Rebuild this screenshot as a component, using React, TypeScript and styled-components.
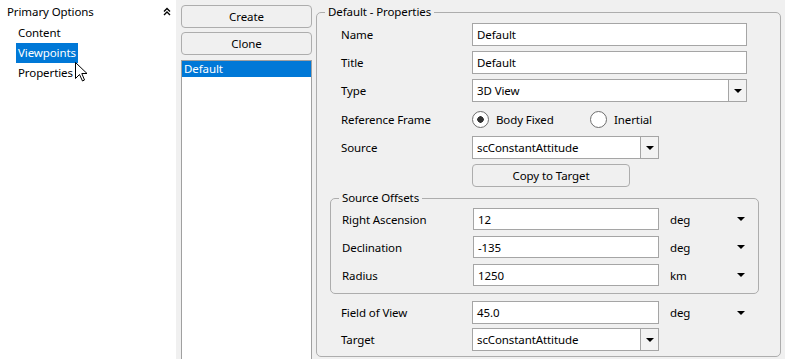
import React from "react";
import styled, { createGlobalStyle } from "styled-components";

const GlobalStyle = createGlobalStyle`
  html, body {
    margin: 0;
    padding: 0;
    background: #f0f0f0;
    overflow: hidden;
  }
  body {
    font-family: "Noto Sans", "Open Sans", sans-serif;
    font-size: 11.5px;
    letter-spacing: -0.1px;
    color: #000;
  }
`;

const Window = styled.div`
  display: flex;
  height: 359px;
  width: 785px;
  background: #f0f0f0;
  overflow: hidden;
`;

// left tree
const Sidebar = styled.div`
  position: relative;
  width: 176px;
  flex-shrink: 0;
  background: #fff;
  padding-top: 1px;
`;

const TreeHeader = styled.div`
  display: flex;
  align-items: center;
  justify-content: space-between;
  height: 20px;
  padding: 0 5px 0 7px;
  margin-bottom: 2px;
`;

const TreeItem = styled.div<{ selected?: boolean }>`
  height: 20px;
  line-height: 20px;
  padding-left: 16px;
  span {
    display: inline-block;
    padding: 0 2px;
    background: ${({ selected }) => (selected ? "#0078d7" : "transparent")};
    color: ${({ selected }) => (selected ? "#fff" : "#000")};
  }
`;

const Cursor = styled.svg`
  position: absolute;
  left: 75px;
  top: 62px;
`;

// middle list
const ListColumn = styled.div`
  display: flex;
  flex-direction: column;
  width: 131px;
  flex-shrink: 0;
  margin-left: 5px;
  padding-top: 5px;
  gap: 4px;
`;

const PushButton = styled.button<{ width?: number }>`
  height: 23px;
  width: ${({ width }) => (width ? `${width}px` : "100%")};
  border: 1px solid #adadad;
  border-radius: 4px;
  background: #f0f0f0;
  font: inherit;
  letter-spacing: inherit;
  color: #000;
  padding: 0;
`;

const ListBox = styled.div`
  flex: 1;
  margin-top: 1px;
  margin-bottom: -4px;
  background: #fff;
  border: 1px solid #a0a0a0;
`;

const ListItem = styled.div<{ selected?: boolean }>`
  height: 16px;
  line-height: 16px;
  padding-left: 2px;
  background: ${({ selected }) => (selected ? "#0078d7" : "transparent")};
  color: ${({ selected }) => (selected ? "#fff" : "#000")};
`;

// group boxes
const Group = styled.div`
  position: relative;
  flex: 1;
  margin: 12px 4px 2px 4px;
  border: 1px solid #adadad;
  border-radius: 5px;
  padding: 10px 33px 6px 13px;
  display: flex;
  flex-direction: column;
`;

const SubGroup = styled(Group)`
  flex: none;
  margin: 11px -12px 7px 0;
  padding: 9px 0 7px 11px;
  gap: 6px;
`;

const GroupTitle = styled.div`
  position: absolute;
  top: -9px;
  left: 8px;
  padding: 0 3px;
  line-height: 16px;
  background: #f0f0f0;
`;

const Row = styled.div<{ gap?: number; height?: number }>`
  display: flex;
  align-items: center;
  height: ${({ height }) => height ?? 23}px;
  padding-left: ${({ gap }) => gap ?? 11}px;
  margin-bottom: 5px;
  flex-shrink: 0;
`;

const OffsetRow = styled(Row)`
  padding-left: 0;
  margin-bottom: 0;
  height: 22px;
`;

const Label = styled.div`
  width: 131px;
  flex-shrink: 0;
`;

const TextBox = styled.div<{ width?: number }>`
  box-sizing: border-box;
  height: 100%;
  width: ${({ width }) => (width ? `${width}px` : "auto")};
  flex: ${({ width }) => (width ? "none" : 1)};
  background: #fff;
  border: 1px solid #a5a5a5;
  padding-left: 4px;
  display: flex;
  align-items: center;
`;

const Combo = styled(TextBox)`
  padding-left: 0;
  span {
    flex: 1;
    padding-left: 4px;
  }
`;

const DropButton = styled.div`
  width: 17px;
  height: 100%;
  border-left: 1px solid #a5a5a5;
  background: #f3f3f3;
  display: flex;
  align-items: center;
  justify-content: center;
`;

const Arrow = styled.div`
  width: 0;
  height: 0;
  border-left: 4px solid transparent;
  border-right: 4px solid transparent;
  border-top: 4px solid #000;
`;

const UnitSelect = styled.div`
  display: flex;
  align-items: center;
  justify-content: space-between;
  width: 75px;
  margin-left: 11px;
`;

const RadioGroup = styled.div`
  display: flex;
  align-items: center;
`;

const Radio = styled.div<{ checked?: boolean; width: number }>`
  display: flex;
  align-items: center;
  gap: 7px;
  width: ${({ width }) => width}px;
  &::before {
    content: "";
    box-sizing: border-box;
    width: 17px;
    height: 17px;
    border-radius: 50%;
    border: 1px solid #6e6e6e;
    background: #fff;
    background-image: ${({ checked }) =>
      checked ? "radial-gradient(circle, #333 0 3px, transparent 3.5px)" : "none"};
  }
`;

const Unit = ({ unit }: { unit: string }) => (
  <UnitSelect>
    <span>{unit}</span>
    <Arrow />
  </UnitSelect>
);

const DropDown = ({ value, width }: { value: string; width?: number }) => (
  <Combo width={width}>
    <span>{value}</span>
    <DropButton>
      <Arrow />
    </DropButton>
  </Combo>
);

const App = () => {
  const offsets = [
    { label: "Right Ascension", value: "12", unit: "deg" },
    { label: "Declination", value: "-135", unit: "deg" },
    { label: "Radius", value: "1250", unit: "km" },
  ];

  return (
    <>
      <GlobalStyle />
      <Window>
        <Sidebar>
          <TreeHeader>
            <span>Primary Options</span>
            <svg width="8" height="9" viewBox="0 0 8 9">
              <path d="M1 4.5 L4 1.5 L7 4.5 M1 8 L4 5 L7 8" fill="none" stroke="#000" strokeWidth="1.4" />
            </svg>
          </TreeHeader>
          <TreeItem><span>Content</span></TreeItem>
          <TreeItem selected><span>Viewpoints</span></TreeItem>
          <TreeItem><span>Properties</span></TreeItem>
          <Cursor width="13" height="20" viewBox="0 0 13 20">
            <path
              d="M0.5 0.5 L0.5 16.5 L4.5 12.5 L7.5 19 L9.5 18 L6.8 11.5 L12 11.5 Z"
              fill="#fff"
              stroke="#000"
              strokeWidth="1"
              strokeLinejoin="miter"
            />
          </Cursor>
        </Sidebar>

        <ListColumn>
          <PushButton>Create</PushButton>
          <PushButton>Clone</PushButton>
          <ListBox>
            <ListItem selected>Default</ListItem>
          </ListBox>
        </ListColumn>

        <Group>
          <GroupTitle>Default - Properties</GroupTitle>
          <Row>
            <Label>Name</Label>
            <TextBox>Default</TextBox>
          </Row>
          <Row>
            <Label>Title</Label>
            <TextBox>Default</TextBox>
          </Row>
          <Row>
            <Label>Type</Label>
            <DropDown value="3D View" />
          </Row>
          <Row height={24}>
            <Label>Reference Frame</Label>
            <RadioGroup>
              <Radio checked width={118}>Body Fixed</Radio>
              <Radio width={80}>Inertial</Radio>
            </RadioGroup>
          </Row>
          <Row>
            <Label>Source</Label>
            <DropDown value="scConstantAttitude" width={187} />
          </Row>
          <Row style={{ marginBottom: 0 }}>
            <Label />
            <PushButton width={158}>Copy to Target</PushButton>
          </Row>

          <SubGroup>
            <GroupTitle>Source Offsets</GroupTitle>
            {offsets.map((o) => (
              <OffsetRow key={o.label}>
                <Label>{o.label}</Label>
                <TextBox width={186}>{o.value}</TextBox>
                <Unit unit={o.unit} />
              </OffsetRow>
            ))}
          </SubGroup>

          <Row style={{ marginBottom: 4 }}>
            <Label>Field of View</Label>
            <TextBox width={187}>45.0</TextBox>
            <Unit unit="deg" />
          </Row>
          <Row style={{ marginBottom: 0 }}>
            <Label>Target</Label>
            <DropDown value="scConstantAttitude" width={187} />
          </Row>
        </Group>
      </Window>
    </>
  );
};

export default App;
